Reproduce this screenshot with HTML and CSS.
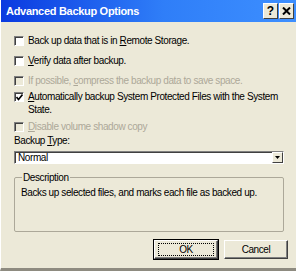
FILE: index.html
```
<!DOCTYPE html>
<html lang="en">
<head>
  <meta charset="UTF-8">
  <title>Advanced Backup Options</title>
  <link rel="stylesheet" href="styles.css">
</head>
<body>
  <div class="window">
    <div class="titlebar">
      <span class="title">Advanced Backup Options</span>
      <div class="tbtns">
        <span class="tbtn">?</span>
        <span class="tbtn">
          <svg width="9" height="8" viewBox="0 0 9 8"><path d="M1 0.5 L8 7.5 M8 0.5 L1 7.5" stroke="#000" stroke-width="2"/></svg>
        </span>
      </div>
    </div>

    <div class="content">
      <div class="opts">
        <div class="opt">
          <span class="box"></span>
          <span class="lbl">Back up data that is in <u>R</u>emote Storage.</span>
        </div>
        <div class="opt">
          <span class="box"></span>
          <span class="lbl"><u>V</u>erify data after backup.</span>
        </div>
        <div class="opt off">
          <span class="box"></span>
          <span class="lbl">If possible, <u>c</u>ompress the backup data to save space.</span>
        </div>
        <div class="opt two">
          <span class="box">
            <svg width="7" height="7" viewBox="0 0 7 7"><path d="M0.5 3 L2.5 5.5 L6.5 0.5" stroke="#000" stroke-width="1.6" fill="none"/></svg>
          </span>
          <span class="lbl"><u>A</u>utomatically backup System Protected Files with the System State.</span>
        </div>
        <div class="opt off last">
          <span class="box"></span>
          <span class="lbl"><u>D</u>isable volume shadow copy</span>
        </div>
      </div>

      <div class="field">
        <div class="flabel">Backup <u>T</u>ype:</div>
        <div class="select">
          <span class="sval">Normal</span>
          <span class="sbtn">
            <svg width="5" height="3" viewBox="0 0 5 3"><path d="M0 0 H5 L2.5 3 Z" fill="#000"/></svg>
          </span>
        </div>
      </div>

      <fieldset class="group">
        <legend>Description</legend>
        <p>Backs up selected files, and marks each file as backed up.</p>
      </fieldset>

      <div class="buttons">
        <button class="btn default"><span class="focus">OK</span></button>
        <button class="btn">Cancel</button>
      </div>
    </div>
  </div>
</body>
</html>
```

FILE: styles.css
```
html, body {
  margin: 0;
  padding: 0;
  background: #ece9d8;
}
.window {
  width: 296px;
  height: 271px;
  box-sizing: border-box;
  overflow: hidden;
  background: #ece9d8;
  border-left: 1px solid #fff;
  border-bottom: 3px solid #8e8b80;
  display: flex;
  flex-direction: column;
  font-family: "Liberation Sans", Arial, sans-serif;
  font-size: 10px;
  letter-spacing: -0.4px;
  color: #000;
}
.titlebar {
  height: 22px;
  flex: none;
  display: flex;
  align-items: center;
  justify-content: space-between;
  padding: 0 2px 0 5px;
  background: linear-gradient(to right, #0a3ae0, #2f7ef8 55%, #3d8fff);
}
.title {
  color: #fff;
  font-weight: bold;
  font-size: 11px;
  letter-spacing: -0.3px;
}
.tbtns {
  display: flex;
  gap: 1px;
}
.tbtn {
  width: 15px;
  height: 16px;
  box-sizing: border-box;
  background: #ece9d8;
  border: 1px solid;
  border-color: #fff #404040 #404040 #fff;
  display: flex;
  align-items: center;
  justify-content: center;
  font-weight: bold;
  font-size: 12px;
  letter-spacing: 0;
  line-height: 1;
}
.content {
  flex: 1;
  padding: 12px 10px 0 13px;
  display: flex;
  flex-direction: column;
}
.opts {
  display: flex;
  flex-direction: column;
  gap: 7px;
}
.opt {
  display: flex;
  align-items: flex-start;
  gap: 4px;
  line-height: 13px;
}
.opt.two {
  margin-top: -4px;
}
.opt.last {
  margin-top: -3px;
}
.opt .box {
  width: 10px;
  height: 10px;
  flex: none;
  margin-top: 2px;
  box-sizing: border-box;
  background: #fff;
  border: 1px solid;
  border-color: #808080 #fff #fff #808080;
  box-shadow: inset 1px 1px 0 #404040;
  display: flex;
  align-items: center;
  justify-content: center;
}
.opt.off .box {
  background: #ece9d8;
}
.opt.off .lbl {
  color: #aca899;
}
.field {
  margin-top: 1px;
}
.flabel {
  line-height: 13px;
}
.select {
  margin-top: 4px;
  height: 13px;
  width: 270px;
  box-sizing: border-box;
  background: #fff;
  border: 1px solid;
  border-color: #808080 #fff #fff #808080;
  box-shadow: inset 1px 1px 0 #404040;
  display: flex;
  align-items: center;
  justify-content: space-between;
  padding-left: 3px;
  line-height: 11px;
}
.sbtn {
  width: 11px;
  height: 11px;
  box-sizing: border-box;
  background: #ece9d8;
  border: 1px solid;
  border-color: #fff #404040 #404040 #fff;
  display: flex;
  align-items: center;
  justify-content: center;
}
.group {
  margin: 7px 0 0 0;
  width: 270px;
  height: 61px;
  box-sizing: border-box;
  padding: 0 6px;
  border: 1px solid #aca899;
  border-radius: 2px;
  line-height: 13px;
}
.group legend {
  padding: 0 1px;
  margin-left: 1px;
}
.group p {
  margin: 2px 0 0 0;
}
.buttons {
  display: flex;
  justify-content: flex-end;
  gap: 6px;
  margin: 8px -2px 0 0;
}
.btn {
  width: 64px;
  height: 19px;
  box-sizing: border-box;
  padding: 0;
  background: #ece9d8;
  border: 1px solid;
  border-color: #fff #404040 #404040 #fff;
  box-shadow: inset -1px -1px 0 #808080;
  font: inherit;
  letter-spacing: inherit;
  color: #000;
}
.btn.default {
  outline: 1px solid #000;
  outline-offset: 0;
}
.focus {
  display: block;
  margin: 1px 3px;
  border: 1px dotted #000;
  line-height: 11px;
}
```
